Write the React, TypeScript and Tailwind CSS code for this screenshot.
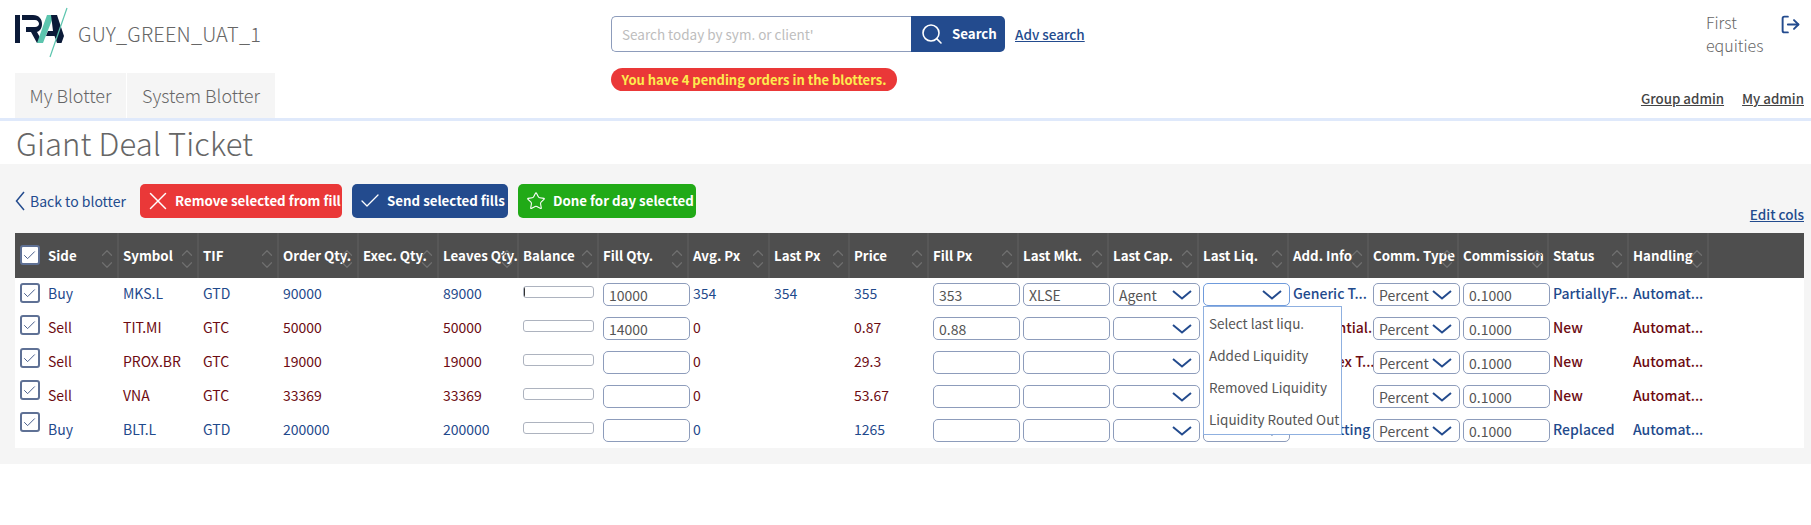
import type { ReactNode } from "react";
import { Check, ChevronDown, ChevronUp, LogOut, Search, Star, X } from "lucide-react";

const FONT = "font-['Noto_Sans_CJK_SC','Liberation_Sans',sans-serif]";

type Col = { label: string; w: string };

const COLS: Col[] = [
  { label: "Side", w: "w-[75px]" },
  { label: "Symbol", w: "w-[80px]" },
  { label: "TIF", w: "w-[80px]" },
  { label: "Order Qty.", w: "w-[80px]" },
  { label: "Exec. Qty.", w: "w-[80px]" },
  { label: "Leaves Qty.", w: "w-[80px]" },
  { label: "Balance", w: "w-[80px]" },
  { label: "Fill Qty.", w: "w-[90px]" },
  { label: "Avg. Px", w: "w-[81px]" },
  { label: "Last Px", w: "w-[80px]" },
  { label: "Price", w: "w-[79px]" },
  { label: "Fill Px", w: "w-[90px]" },
  { label: "Last Mkt.", w: "w-[90px]" },
  { label: "Last Cap.", w: "w-[90px]" },
  { label: "Last Liq.", w: "w-[90px]" },
  { label: "Add. Info", w: "w-[80px]" },
  { label: "Comm. Type", w: "w-[90px]" },
  { label: "Commission", w: "w-[90px]" },
  { label: "Status", w: "w-[80px]" },
  { label: "Handling", w: "w-[80px]" },
];

type Order = {
  side: string;
  symbol: string;
  tif: string;
  qty: string;
  leaves: string;
  progress: boolean;
  fillQty: string;
  avg: string;
  last: string;
  price: string;
  fillPx: string;
  mkt: string;
  cap: string;
  info: string;
  status: string;
  checkTop: string;
};

const ORDERS: Order[] = [
  { side: "Buy", symbol: "MKS.L", tif: "GTD", qty: "90000", leaves: "89000", progress: true, fillQty: "10000", avg: "354", last: "354", price: "355", fillPx: "353", mkt: "XLSE", cap: "Agent", info: "Generic T...", status: "PartiallyF...", checkTop: "pt-[5px]" },
  { side: "Sell", symbol: "TIT.MI", tif: "GTC", qty: "50000", leaves: "50000", progress: false, fillQty: "14000", avg: "0", last: "", price: "0.87", fillPx: "0.88", mkt: "", cap: "", info: "Residential...", status: "New", checkTop: "pt-[3px]" },
  { side: "Sell", symbol: "PROX.BR", tif: "GTC", qty: "19000", leaves: "19000", progress: false, fillQty: "", avg: "0", last: "", price: "29.3", fillPx: "", mkt: "", cap: "", info: "Complex T...", status: "New", checkTop: "pt-[2px]" },
  { side: "Sell", symbol: "VNA", tif: "GTC", qty: "33369", leaves: "33369", progress: false, fillQty: "", avg: "0", last: "", price: "53.67", fillPx: "", mkt: "", cap: "", info: "", status: "New", checkTop: "pt-0" },
  { side: "Buy", symbol: "BLT.L", tif: "GTD", qty: "200000", leaves: "200000", progress: false, fillQty: "", avg: "0", last: "", price: "1265", fillPx: "", mkt: "", cap: "", info: "Pre-Netting", status: "Replaced", checkTop: "-mt-[2px]" },
];

function Logo() {
  return (
    <svg width="64" height="56" viewBox="0 0 64 56" className="shrink-0">
      <path d="M5 10h5v28H5z" fill="#0b1a38" />
      <path d="M12 10h11c6 0 9 4 9 9 0 4-2 7-5 8l6 11h-6l-6-11h-5v-5h9c2.500 0 4-1.300 4-3.200s-1.500-3.800-4-3.800H12z" fill="#0b1a38" />
      <path d="M27 38h6l11-28h-7z" fill="#5cc5ae" />
      <path d="M41 10h6l7 21-2.500 7H47l-2.500-7H36l2-5h5z" fill="#0b1a38" />
      <path d="M40 52 57 3" stroke="#5cc5ae" strokeWidth="1.200" fill="none" />
    </svg>
  );
}

function Caret() {
  return (
    <svg width="20" height="10" viewBox="0 0 20 10" className="shrink-0" fill="none">
      <path d="M1 1l9 7.500L19 1" stroke="#234b8e" strokeWidth="2" />
    </svg>
  );
}

function Checkbox() {
  return (
    <span className="flex h-[20px] w-[20px] items-center justify-center rounded-[3px] border-2 border-[#5f7195] bg-white">
      <Check size={15} strokeWidth={1.5} className="text-[#3f5585]" />
    </span>
  );
}

function TextBox({ value }: { value: string }) {
  return (
    <div className="flex h-[23px] w-[87px] items-center rounded-[5px] border border-[#8d9cbb] bg-white px-[5px] text-[14px] leading-none text-[#555]">
      {value}
    </div>
  );
}

function SelectBox({ value, focus }: { value: string; focus?: boolean }) {
  return (
    <div className={`flex h-[23px] w-[87px] items-center justify-between rounded-[5px] border bg-white pl-[5px] pr-[7px] text-[14px] leading-none text-[#555] ${focus ? "border-[#6f9bdc]" : "border-[#8d9cbb]"}`}>
      <span>{value}</span>
      <Caret />
    </div>
  );
}

function HeaderCell({ col }: { col: Col }) {
  return (
    <div className={`relative flex h-full ${col.w} shrink-0 items-center border-r-2 border-[#575757] pl-[4px]`}>
      <span className="whitespace-nowrap text-[13.300px] font-semibold leading-none text-white">{col.label}</span>
      <span className="absolute right-[1px] top-[11px] flex flex-col text-[#707070]">
        <ChevronUp size={18} strokeWidth={1.6} className="-mb-[6px]" />
        <ChevronDown size={18} strokeWidth={1.6} />
      </span>
    </div>
  );
}

function Cell({ col, className = "", children }: { col: number; className?: string; children?: ReactNode }) {
  return <div className={`${COLS[col].w} shrink-0 whitespace-nowrap pl-[4px] ${className || "pt-[5px]"}`}>{children}</div>;
}

function LiquidityMenu() {
  const items = ["Select last liqu.", "Added Liquidity", "Removed Liquidity", "Liquidity Routed Out"];
  return (
    <div className="absolute left-[4px] top-[28px] z-10 h-[129px] w-[139px] border border-[#8fb0e0] bg-white px-[5px] pt-[1px] text-[13.500px] leading-none text-[#555]">
      {items.map((item) => (
        <div key={item} className="flex h-[32px] items-center whitespace-nowrap">
          {item}
        </div>
      ))}
    </div>
  );
}

function Row({ order, index }: { order: Order; index: number }) {
  const tone = order.side === "Buy" ? "text-[#1f4a8c]" : "text-[#6d0b12]";
  return (
    <div className={`flex h-[34px] items-start text-[14px] leading-[20px] ${tone}`}>
      <div className={`flex w-[29px] shrink-0 justify-center ${order.checkTop}`}>
        <Checkbox />
      </div>
      <Cell col={0}>{order.side}</Cell>
      <Cell col={1}>{order.symbol}</Cell>
      <Cell col={2}>{order.tif}</Cell>
      <Cell col={3}>{order.qty}</Cell>
      <Cell col={4} />
      <Cell col={5}>{order.leaves}</Cell>
      <Cell col={6} className="pt-[8px]">
        <div className="h-[12px] w-[71px] overflow-hidden rounded-[3px] border border-[#adb3bf] bg-white">
          {order.progress && <div className="h-full w-[1px] bg-[#333]" />}
        </div>
      </Cell>
      <Cell col={7}>
        <TextBox value={order.fillQty} />
      </Cell>
      <Cell col={8}>{order.avg}</Cell>
      <Cell col={9}>{order.last}</Cell>
      <Cell col={10}>{order.price}</Cell>
      <Cell col={11}>
        <TextBox value={order.fillPx} />
      </Cell>
      <Cell col={12}>
        <TextBox value={order.mkt} />
      </Cell>
      <Cell col={13}>
        <SelectBox value={order.cap} />
      </Cell>
      <Cell col={14} className="relative pt-[5px]">
        <SelectBox value="" focus={index === 0} />
        {index === 0 && <LiquidityMenu />}
      </Cell>
      <Cell col={15} className="pt-[5px] font-medium">{order.info}</Cell>
      <Cell col={16}>
        <SelectBox value="Percent" />
      </Cell>
      <Cell col={17}>
        <TextBox value="0.1000" />
      </Cell>
      <Cell col={18} className="pt-[5px] font-medium">{order.status}</Cell>
      <Cell col={19} className="pt-[5px] font-medium">Automat...</Cell>
    </div>
  );
}

function ActionButton({ className, icon, label }: { className: string; icon: ReactNode; label: string }) {
  return (
    <button className={`flex h-[34px] items-center rounded-[5px] text-[13.300px] font-semibold leading-none text-white ${className}`}>
      <span className="flex w-[35px] shrink-0 justify-center">{icon}</span>
      <span className="whitespace-nowrap">{label}</span>
    </button>
  );
}

export default function App() {
  return (
    <div className={`h-[525px] w-[1811px] overflow-hidden bg-white ${FONT}`}>
      <header className="flex h-[121px] border-b-[3px] border-[#dfe9fb]">
        <div className="flex w-[611px] shrink-0 flex-col">
          <div className="flex h-[73px] items-start pl-[10px] pt-[5px]">
            <Logo />
            <span className="ml-[4px] mt-[16px] text-[20px] font-light leading-[26px] tracking-[0.2px] text-[#666]">GUY_GREEN_UAT_1</span>
          </div>
          <nav className="flex h-[45px] pl-[15px] text-[18px] font-light text-[#666]">
            <div className="flex w-[111px] items-center justify-center bg-[#f5f5f5]">My Blotter</div>
            <div className="ml-[1px] flex w-[148px] items-center justify-center bg-[#f5f5f5]">System Blotter</div>
          </nav>
        </div>
        <div className="flex flex-col pt-[16px]">
          <div className="flex items-center">
            <div className="flex h-[36px] w-[300px] items-center rounded-l-[5px] border border-r-0 border-[#8d9cbb] px-[10px] text-[13.500px] text-[#bdbdbd]">Search today by sym. or client'</div>
            <button className="flex h-[36px] w-[94px] items-center rounded-r-[5px] bg-[#234b8e] text-[13.300px] font-semibold text-white">
              <span className="flex w-[41px] shrink-0 justify-center">
                <Search size={24} strokeWidth={1.6} />
              </span>
              Search
            </button>
            <span className="ml-[10px] text-[13.500px] font-medium text-[#234b8e] underline">Adv search</span>
          </div>
          <div className="mt-[16px] flex h-[23px] w-[286px] items-center justify-center whitespace-nowrap rounded-full bg-[#ea3838] text-[13px] font-semibold leading-none text-[#fdeb4e]">You have 4 pending orders in the blotters.</div>
        </div>
        <div className="ml-auto mr-[7px] flex w-[164px] shrink-0 flex-col">
          <div className="flex h-[89px] items-start justify-end pt-[11px]">
            <span className="w-[74px] text-[16px] font-light leading-[23px] text-[#666]">First equities</span>
            <LogOut size={21} strokeWidth={2.200} className="mr-[3px] mt-[3px] text-[#234b8e]" />
          </div>
          <div className="flex justify-end gap-[18px] whitespace-nowrap text-[13.300px] font-medium leading-[20px] text-[#444] underline">
            <span>Group admin</span>
            <span>My admin</span>
          </div>
        </div>
      </header>

      <h1 className="flex h-[42px] items-center pl-[16px] text-[31px] font-light leading-none tracking-[0.1px] text-[#666]">Giant Deal Ticket</h1>

      <main className="mt-[1px] h-[300px] bg-[#f5f5f5] pl-[15px] pr-[7px] pt-[20px]">
        <div className="flex h-[34px] items-center">
          <span className="flex w-[125px] items-center text-[14px] leading-none text-[#234b8e]">
            <svg width="10" height="20" viewBox="0 0 10 20" fill="none" className="mr-[5px] shrink-0">
              <path d="M9 1 1.500 10 9 19" stroke="#234b8e" strokeWidth="1.500" />
            </svg>
            Back to blotter
          </span>
          <ActionButton className="w-[202px] bg-[#ea3838]" icon={<X size={30} strokeWidth={1.200} />} label="Remove selected from fill" />
          <ActionButton className="ml-[10px] w-[156px] bg-[#234b8e]" icon={<Check size={24} strokeWidth={1.300} />} label="Send selected fills" />
          <ActionButton className="ml-[10px] w-[178px] bg-[#21aa17]" icon={<Star size={20} strokeWidth={1.300} />} label="Done for day selected" />
          <span className="ml-auto mt-[26px] text-[13.500px] font-medium leading-[20px] text-[#234b8e] underline">Edit cols</span>
        </div>

        <div className="mt-[15px] flex h-[45px] items-center bg-[#4e4e4e]">
          <div className="flex h-full w-[29px] shrink-0 items-center justify-center pb-[1px]">
            <Checkbox />
          </div>
          {COLS.map((col) => (
            <HeaderCell key={col.label} col={col} />
          ))}
        </div>

        <div className="bg-white">
          {ORDERS.map((order, i) => (
            <Row key={order.symbol} order={order} index={i} />
          ))}
        </div>
      </main>
    </div>
  );
}
